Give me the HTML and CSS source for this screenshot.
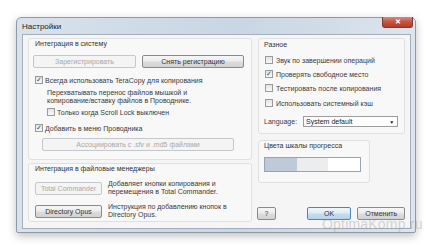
FILE: index.html
```html
<!DOCTYPE html>
<html lang="ru">
<head>
  <meta charset="UTF-8">
  <title>Настройки</title>
  <link rel="stylesheet" href="styles.css">
</head>
<body>

  <div class="window">
    <div class="titlebar">
      <span class="title">Настройки</span>
      <div class="close-btn">✕</div>
    </div>

    <div class="client">
      <!-- left column -->
      <div class="col-left">
        <div class="group group-system">
          <div class="group-title">Интеграция в систему</div>
          <div class="btn-row">
            <button class="btn btn-disabled btn-reg">Зарегистрировать</button>
            <button class="btn btn-unreg">Снять регистрацию</button>
          </div>
          <div class="check-row row-always">
            <span class="check checked">✓</span>
            <span>Всегда использовать TeraCopy для копирования</span>
          </div>
          <div class="desc">
            Перехватывать перенос файлов мышкой и<br>
            копирование/вставку файлов в Проводнике.
          </div>
          <div class="check-row row-scroll">
            <span class="check"></span>
            <span>Только когда Scroll Lock выключен</span>
          </div>
          <div class="check-row row-menu">
            <span class="check checked">✓</span>
            <span>Добавить в меню Проводника</span>
          </div>
          <button class="btn btn-disabled btn-assoc">Ассоциировать с .sfv и .md5 файлами</button>
        </div>

        <div class="group group-managers">
          <div class="group-title">Интеграция в файловые менеджеры</div>
          <div class="manager-row">
            <button class="btn btn-disabled btn-manager">Total Commander</button>
            <div class="manager-text">Добавляет кнопки копирования и<br>перемещения в Total Commander.</div>
          </div>
          <div class="manager-row row-opus">
            <button class="btn btn-manager">Directory Opus</button>
            <div class="manager-text">Инструкция по добавлению кнопок в<br>Directory Opus.</div>
          </div>
        </div>
      </div>

      <!-- right column -->
      <div class="col-right">
        <div class="group group-misc">
          <div class="group-title">Разное</div>
          <div class="check-row misc-row first">
            <span class="check"></span>
            <span>Звук по завершении операций</span>
          </div>
          <div class="check-row misc-row">
            <span class="check checked">✓</span>
            <span>Проверять свободное место</span>
          </div>
          <div class="check-row misc-row">
            <span class="check"></span>
            <span>Тестировать после копирования</span>
          </div>
          <div class="check-row misc-row last">
            <span class="check"></span>
            <span>Использовать системный кэш</span>
          </div>
          <div class="lang-row">
            <span>Language:</span>
            <div class="select">
              <span>System default</span>
              <span class="arrow">▼</span>
            </div>
          </div>
        </div>

        <div class="group group-progress">
          <div class="group-title">Цвета шкалы прогресса</div>
          <div class="progress-bar">
            <div class="seg seg-done"></div>
            <div class="seg seg-mid"></div>
            <div class="seg seg-empty"></div>
          </div>
        </div>

        <div class="dialog-buttons">
          <button class="btn btn-help">?</button>
          <button class="btn btn-ok">OK</button>
          <button class="btn btn-cancel">Отменить</button>
        </div>
      </div>
    </div>
  </div>

  <div class="watermark">OptimaKomp.ru</div>

</body>
</html>
```

FILE: styles.css
```css
body {
  margin: 0;
  width: 434px;
  height: 250px;
  background: #ffffff;
  font-family: "Liberation Sans", Arial, sans-serif;
  font-size: 7px;
  color: #3a3a3a;
  overflow: hidden;
  position: relative;
}

.window {
  margin: 17px 0 0 16px;
  width: 398px;
  height: 214px;
  border: 1px solid #8e9aa8;
  border-radius: 5px 5px 2px 2px;
  background: linear-gradient(90deg, #d9e2ec 0%, #cfdbe7 30%, #c9d6e3 55%, #d3dde8 80%, #dde5ee 100%);
  box-shadow: 0 3px 8px rgba(0, 0, 0, 0.25);
}

.titlebar {
  height: 16px;
  display: flex;
  justify-content: space-between;
  align-items: flex-start;
  padding-left: 5px;
}

.title {
  font-size: 8px;
  color: #1a1a1a;
  margin-top: 4px;
}

.close-btn {
  width: 29px;
  height: 10px;
  margin-top: -1px;
  margin-right: 2px;
  border: 1px solid #7a3b33;
  border-top: none;
  border-radius: 0 0 3px 3px;
  background: linear-gradient(#d88a7e, #c35343 50%, #b53a2a);
  color: #ffffff;
  font-size: 7px;
  font-weight: bold;
  text-align: center;
  line-height: 10px;
}

.client {
  margin-left: 5px;
  width: 387px;
  height: 193px;
  border: 1px solid #a4afbc;
  background: #f5f5f5;
  display: flex;
  gap: 6px;
  padding: 3px 0 0 5px;
  box-sizing: content-box;
}

.client {
  width: 382px;
  height: 190px;
}

.col-left {
  width: 224px;
  display: flex;
  flex-direction: column;
  gap: 3px;
}

.col-right {
  width: 147px;
  display: flex;
  flex-direction: column;
}

.group {
  box-sizing: border-box;
  border: 1px solid #e0e0e0;
  border-radius: 3px;
  background: #f8f8f8;
}

.group-title {
  line-height: 10px;
  height: 10px;
  color: #333;
}

.group-system {
  height: 122px;
  padding: 0 4px;
}

.group-system .group-title {
  padding-left: 2px;
}

.btn {
  font-family: inherit;
  font-size: 7px;
  color: #333;
  height: 13px;
  padding: 0;
  border: 1px solid #8a8a8a;
  border-radius: 2px;
  background: linear-gradient(#f6f6f6 0%, #ececec 48%, #dcdcdc 52%, #d2d2d2 100%);
  box-sizing: border-box;
  line-height: 11px;
  white-space: nowrap;
}

.btn-disabled {
  border-color: #c4c8cc;
  background: #f4f4f4;
  color: #a8a8a8;
}

.btn-row {
  display: flex;
  gap: 6px;
  margin-top: 6px;
}

.btn-reg {
  width: 103px;
}

.btn-unreg {
  width: 102px;
}

.check-row {
  display: flex;
  align-items: center;
  height: 10px;
  gap: 2px;
  white-space: nowrap;
}

.check {
  width: 8px;
  height: 8px;
  box-sizing: border-box;
  border: 1px solid #9a9a9a;
  background: linear-gradient(#e4e4e4, #f8f8f8);
  font-size: 7px;
  line-height: 6px;
  text-align: center;
  color: #3a4a60;
  flex-shrink: 0;
}

.row-always {
  margin: 7px 0 0 2px;
}

.desc {
  margin: 4px 0 0 14px;
  line-height: 8px;
}

.row-scroll {
  margin: 2px 0 0 14px;
}

.row-menu {
  margin: 6px 0 0 2px;
}

.btn-assoc {
  margin: 5px 0 0 9px;
  width: 192px;
}

.group-managers {
  height: 59px;
  padding: 0 6px;
}

.manager-row {
  display: flex;
  align-items: center;
  gap: 6px;
  margin-top: 6px;
}

.row-opus {
  margin-top: 7px;
}

.btn-manager {
  width: 67px;
  flex-shrink: 0;
}

.manager-text {
  line-height: 8px;
  white-space: nowrap;
}

.group-misc {
  height: 96px;
  padding: 1px 5px 0;
}

.misc-row {
  margin: 4px 0 0 1px;
  gap: 3px;
}

.misc-row.first,
.misc-row.last {
  margin-top: 5px;
}

.lang-row {
  display: flex;
  align-items: center;
  margin-top: 8px;
  height: 11px;
  gap: 6px;
}

.select {
  width: 95px;
  height: 11px;
  box-sizing: border-box;
  border: 1px solid #9c9c9c;
  background: #ffffff;
  display: flex;
  justify-content: space-between;
  align-items: center;
  padding: 0 3px 0 2px;
  color: #222;
}

.arrow {
  font-size: 5px;
}

.group-progress {
  margin-top: 6px;
  width: 112px;
  height: 43px;
  padding: 0 5px;
}

.group-progress .group-title {
  line-height: 9px;
  height: 9px;
}

.progress-bar {
  margin-top: 7px;
  width: 97px;
  height: 15px;
  box-sizing: border-box;
  border: 1px solid #9aa4ae;
  display: flex;
}

.seg {
  flex: 1;
}

.seg-done {
  background: #bfcad8;
}

.seg-mid {
  background: #ebedef;
}

.seg-empty {
  background: #ffffff;
}

.dialog-buttons {
  display: flex;
  margin: 24px 0 0 -1px;
}

.btn-help {
  width: 19px;
}

.btn-ok {
  width: 45px;
  margin-left: 31px;
  border-color: #4a86b8;
  background: linear-gradient(#eef6fc 0%, #dcebf7 48%, #c4dcef 52%, #b7d3ea 100%);
}

.btn-cancel {
  width: 48px;
  margin-left: 6px;
}

.watermark {
  position: absolute;
  left: 322px;
  top: 216px;
  font-size: 14px;
  color: rgba(140, 140, 140, 0.35);
  letter-spacing: 0.2px;
}
```
